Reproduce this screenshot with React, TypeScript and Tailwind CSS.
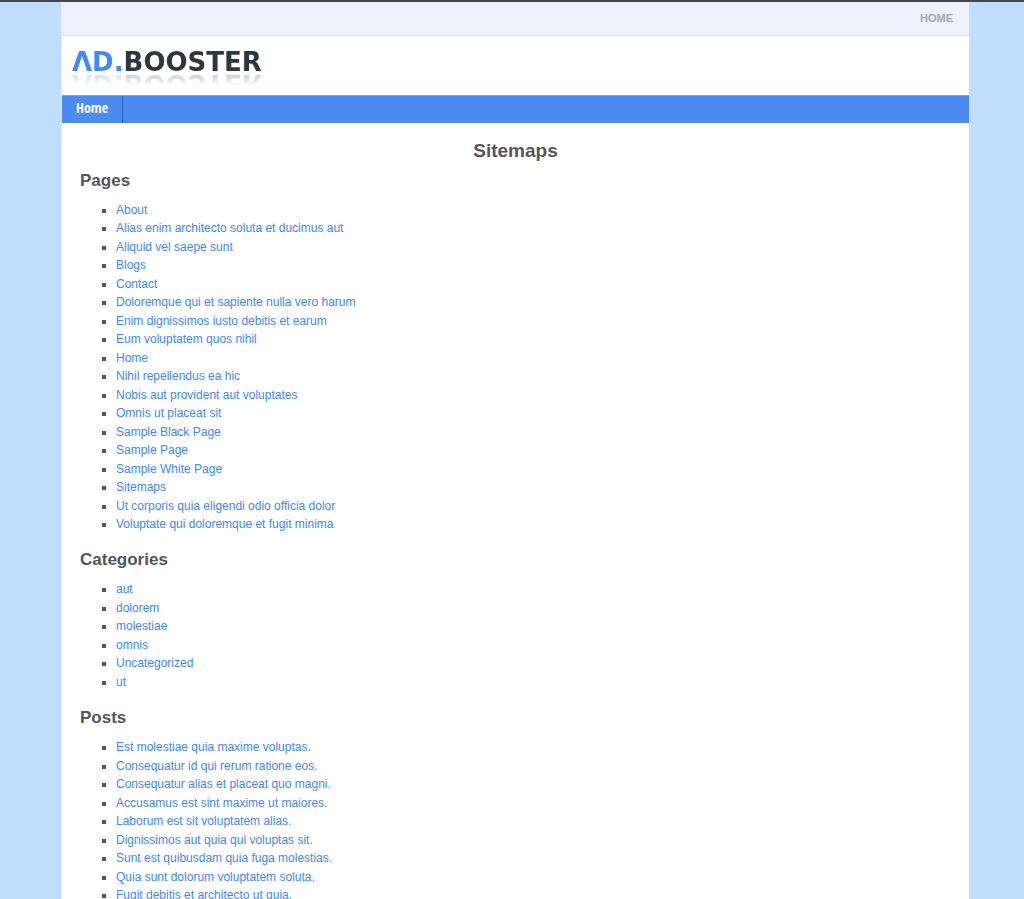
const pages = [
  "About",
  "Alias enim architecto soluta et ducimus aut",
  "Aliquid vel saepe sunt",
  "Blogs",
  "Contact",
  "Doloremque qui et sapiente nulla vero harum",
  "Enim dignissimos iusto debitis et earum",
  "Eum voluptatem quos nihil",
  "Home",
  "Nihil repellendus ea hic",
  "Nobis aut provident aut voluptates",
  "Omnis ut placeat sit",
  "Sample Black Page",
  "Sample Page",
  "Sample White Page",
  "Sitemaps",
  "Ut corporis quia eligendi odio officia dolor",
  "Voluptate qui doloremque et fugit minima",
];

const categories = ["aut", "dolorem", "molestiae", "omnis", "Uncategorized", "ut"];

const posts = [
  "Est molestiae quia maxime voluptas.",
  "Consequatur id qui rerum ratione eos.",
  "Consequatur alias et placeat quo magni.",
  "Accusamus est sint maxime ut maiores.",
  "Laborum est sit voluptatem alias.",
  "Dignissimos aut quia qui voluptas sit.",
  "Sunt est quibusdam quia fuga molestias.",
  "Quia sunt dolorum voluptatem soluta.",
  "Fugit debitis et architecto ut quia.",
];

function LinkSection({ title, items }: { title: string; items: string[] }) {
  return (
    <section className="mb-[17px]">
      <h2 className="mb-2.5 text-[17px] leading-5 font-bold">{title}</h2>
      <ul className="list-[square] pl-9 text-xs leading-[1.54]">
        {items.map((item) => (
          <li key={item}>
            <a href="#" className="text-[#4387f0] hover:underline">
              {item}
            </a>
          </li>
        ))}
      </ul>
    </section>
  );
}

export default function App() {
  return (
    <div className="h-screen overflow-hidden border-t-2 border-[#47484c] bg-[#c0dfff] pr-[55px] pl-[61px] font-['Liberation_Sans',Arial,sans-serif] text-[#555658]">
      <div className="min-h-full border-l border-[#e3effd] bg-white">
        <div className="flex h-[34px] items-start justify-end border-b border-[#dfe3f0] bg-[#ecf1fb] px-4 pt-2">
          <a href="#" className="text-[11px] leading-4 font-bold text-[#a5a7ab]">
            HOME
          </a>
        </div>
        <header className="flex h-[59px] items-start px-2.5 pt-2.5">
          <a
            href="#"
            className="font-['DejaVu_Sans',sans-serif] text-[26px] leading-8 font-bold text-[#2e3640] [-webkit-box-reflect:below_-10px_linear-gradient(transparent_45%,rgb(0_0_0/0.4))]"
          >
            <span className="text-[#4689f2]">ΛD.</span>BOOSTER
          </a>
        </header>
        <nav className="flex h-7 border-t border-[#7ba5e8] bg-[#4c8bf1]">
          <a
            href="#"
            className="border-r border-[#1f62d0] px-3.5 font-['Open_Sans_Condensed','DejaVu_Sans_Condensed',sans-serif] text-sm leading-6 text-white"
          >
            Home
          </a>
        </nav>
        <main className="px-[18px] pt-4">
          <h1 className="mb-2 text-center text-[19px] leading-6 font-bold">Sitemaps</h1>
          <LinkSection title="Pages" items={pages} />
          <LinkSection title="Categories" items={categories} />
          <LinkSection title="Posts" items={posts} />
        </main>
      </div>
    </div>
  );
}
